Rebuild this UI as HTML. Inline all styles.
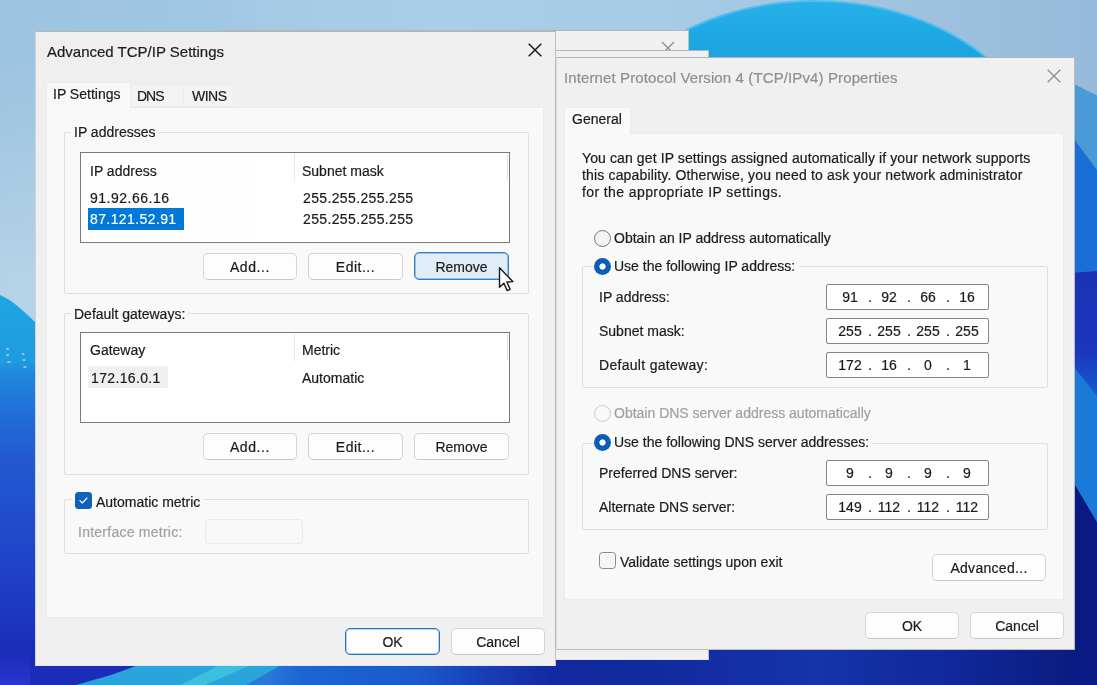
<!DOCTYPE html>
<html lang="en">
<head>
<meta charset="utf-8">
<title>Advanced TCP/IP Settings</title>
<style>
*{box-sizing:border-box;margin:0;padding:0}
html,body{width:1097px;height:685px;overflow:hidden;background:#9fc5e0}
body{-webkit-text-stroke:.2px currentColor;position:relative;font-family:"Liberation Sans",Arial,sans-serif;font-size:14px;color:#1b1b1b;line-height:16px}
.abs,.win,.t,.btn,.grp,.list,.ipf,.page,.tab{position:absolute}
#wall{position:absolute;left:0;top:0;width:1097px;height:685px}
.win{background:#f0f0f0;border:1px solid #bebebe;border-top-color:#b2b6ba;border-left-color:#cdd4da;border-bottom-color:#e6e6e6}
.page{background:#f9f9f9;border:1px solid #ececec}
.t{white-space:nowrap;height:16px;line-height:16px}
.title{font-size:15px}
.grp{border:1px solid #dfdfdf;border-radius:2px}
.glab{position:absolute;background:#f9f9f9;white-space:nowrap;height:16px;line-height:16px}
.list{background:#fff;border:1px solid #7a7a7a}
.btn{height:27px;padding-top:1px;border:1px solid #d4d4d4;border-bottom-color:#c6c6c6;border-radius:5px;background:#fdfdfd;text-align:center;line-height:25px;white-space:nowrap}
.btn.def{border:1px solid #1f74c4;box-shadow:inset 0 0 0 1px rgba(31,116,196,.3);line-height:25px}
.btn.hot{border:1px solid #2d7fc6;box-shadow:inset 0 0 0 1px rgba(45,127,198,.4);background:#e0edf9;line-height:25px;padding-top:1.5px}
.ipf{height:26px;width:163px;border:1px solid #868686;border-radius:2px;background:#fff}
.ipf span{position:absolute;top:4px;width:30px;text-align:center;height:16px;line-height:16px;white-space:nowrap}
.ipf i{position:absolute;top:4px;width:8px;text-align:center;font-style:normal;height:16px;line-height:16px}
.radio{position:absolute;width:17px;height:17px;border-radius:50%;border:1px solid #787878;background:#f3f3f3}
.radio.on{border:none;background:radial-gradient(circle at center,#fff 0,#fff 2.7px,#0c5fb6 3.5px)}
.radio.dis{border-color:#c9c9c9;background:#f8f8f8}
.gray{color:#a0a0a0}
</style>
</head>
<body>
<div id="root" style="position:absolute;left:0;top:0;width:1097px;height:685px;overflow:hidden;will-change:transform;opacity:.999">
<svg id="wall" viewBox="0 0 1097 685" preserveAspectRatio="none">
<defs>
<linearGradient id="sky" x1="0" y1="0" x2="1" y2="0">
<stop offset="0" stop-color="#9cc3df"/><stop offset="0.4" stop-color="#a9cfe8"/><stop offset="0.6" stop-color="#a6cce6"/><stop offset="1" stop-color="#98badA"/>
</linearGradient>
<linearGradient id="skyv" x1="0" y1="0" x2="0" y2="1">
<stop offset="0" stop-color="#fff" stop-opacity="0"/><stop offset="0.15" stop-color="#fff" stop-opacity="0"/><stop offset="0.8" stop-color="#fff" stop-opacity="0.25"/><stop offset="1" stop-color="#fff" stop-opacity="0.25"/>
</linearGradient>
<linearGradient id="leftb" x1="0" y1="295" x2="0" y2="685" gradientUnits="userSpaceOnUse">
<stop offset="0" stop-color="#1fa6e2"/><stop offset="0.17" stop-color="#1f9be0"/><stop offset="0.2" stop-color="#2088dc"/><stop offset="0.3" stop-color="#2070d8"/><stop offset="0.42" stop-color="#2259d2"/><stop offset="0.7" stop-color="#1f42c8"/><stop offset="0.92" stop-color="#1b2cba"/><stop offset="1" stop-color="#2a35d0"/>
</linearGradient>
<linearGradient id="bot" x1="270" y1="0" x2="1097" y2="0" gradientUnits="userSpaceOnUse">
<stop offset="0" stop-color="#2a78d8"/><stop offset="0.036" stop-color="#1b66d2"/><stop offset="0.18" stop-color="#1a5acb"/><stop offset="0.254" stop-color="#1840b8"/><stop offset="0.35" stop-color="#12289e"/><stop offset="0.447" stop-color="#112a9e"/><stop offset="0.665" stop-color="#1434a8"/><stop offset="0.822" stop-color="#10289a"/><stop offset="0.955" stop-color="#0c1d84"/><stop offset="1" stop-color="#08146e"/>
</linearGradient>
<linearGradient id="r3" x1="0" y1="273" x2="0" y2="400" gradientUnits="userSpaceOnUse">
<stop offset="0" stop-color="#1a33b6"/><stop offset="0.6" stop-color="#1a36bc"/><stop offset="1" stop-color="#1a5ed0"/>
</linearGradient>
<linearGradient id="bloom" x1="0" y1="0" x2="0" y2="70" gradientUnits="userSpaceOnUse"><stop offset="0" stop-color="#27b0e8"/><stop offset="1" stop-color="#16a2e0"/></linearGradient>
</defs>
<rect width="1097" height="685" fill="url(#sky)"/>
<rect width="600" height="340" fill="url(#skyv)"/>
<path d="M0 295 C12 300 24 311 40 327 L40 685 L0 685Z" fill="url(#leftb)"/>
<g fill="#cfeaf8" opacity=".6"><ellipse cx="7.5" cy="349" rx="1.6" ry="1"/><ellipse cx="7.5" cy="355" rx="1.6" ry="1"/><ellipse cx="9" cy="362" rx="2" ry="1.1"/><ellipse cx="23" cy="354" rx="1.6" ry="1"/><ellipse cx="24" cy="360" rx="1.6" ry="1"/><ellipse cx="25" cy="367" rx="1.8" ry="1"/></g>
<rect x="30" y="640" width="120" height="45" fill="#1a2cb8"/>
<rect x="246" y="640" width="851" height="45" fill="url(#bot)"/>
<path d="M76 685 C100 678 125 672 148 660 L290 660 L246 685Z" fill="#2aa5dc"/>
<path d="M180 685 L230 660 L262 660 L205 685Z" fill="#3cc0e0"/>
<ellipse cx="815" cy="171" rx="230" ry="170" fill="url(#bloom)" stroke="#52bdec" stroke-width="2"/>
<path d="M1070 82 L1097 95.5 L1097 170 L1070 133Z" fill="#4b9ad8"/>
<path d="M1070 133 L1097 170 L1097 273 L1070 273Z" fill="#1a6fd6"/>
<path d="M1070 273 L1097 271 L1097 400 L1070 365Z" fill="url(#r3)"/>
<path d="M1070 362 L1097 396 L1097 522 L1070 476Z" fill="#1a7ad8"/>
<path d="M1070 476 L1097 522 L1097 685 L1070 685Z" fill="#0a1a85"/>
</svg>

<!-- hidden windows behind -->
<div class="win" style="left:217px;top:30px;width:472px;height:620px"></div>
<svg class="abs" style="left:661px;top:41px" width="14" height="14" viewBox="0 0 14 14"><path d="M1 1L13 13M13 1L1 13" stroke="#8c8c8c" stroke-width="1.3" fill="none"/></svg>
<div class="win" style="left:540px;top:50px;width:169px;height:610px"></div>

<!-- LEFT WINDOW -->
<div class="win" id="lw" style="left:35px;top:31px;width:521px;height:635px"></div>
<div class="t title" style="left:47px;top:44px">Advanced TCP/IP Settings</div>
<svg class="abs" style="left:528px;top:43px" width="14" height="14" viewBox="0 0 14 14"><path d="M0.7 0.7L13.3 13.3M13.3 0.7L0.7 13.3" stroke="#1a1a1a" stroke-width="1.5" fill="none"/></svg>

<div class="tab" style="left:130px;top:84px;width:54px;height:23px;background:#f4f4f4;border:1px solid #eeeeee"></div>
<div class="tab" style="left:183px;top:84px;width:51px;height:23px;background:#f4f4f4;border:1px solid #eeeeee"></div>
<div class="page" style="left:46px;top:107px;width:498px;height:511px"></div>
<div class="tab" style="left:46px;top:82px;width:85px;height:26px;background:#f9f9f9;border:1px solid #ececec;border-bottom:none"></div>
<div class="t" style="left:53px;top:86px">IP Settings</div>
<div class="t" style="left:137px;top:88px;letter-spacing:-1px">DNS</div>
<div class="t" style="left:192px;top:88px;letter-spacing:-.5px">WINS</div>

<!-- group 1 -->
<div class="grp" style="left:64px;top:132px;width:465px;height:162px"></div>
<div class="glab" style="left:71px;top:124px;padding:0 3px">IP addresses</div>
<div class="list" style="left:80px;top:152px;width:430px;height:91px"></div>
<div class="abs" style="left:294px;top:154px;width:1px;height:27px;background:#e5e5e5"></div>
<div class="abs" style="left:507px;top:154px;width:1px;height:27px;background:#e5e5e5"></div>
<div class="t" style="left:90px;top:163px">IP address</div>
<div class="t" style="left:302px;top:163px">Subnet mask</div>
<div class="t" style="left:90px;top:190px;letter-spacing:.5px">91.92.66.16</div>
<div class="t" style="left:303px;top:190px;letter-spacing:.36px">255.255.255.255</div>
<div class="abs" style="left:88px;top:208px;width:96px;height:22px;background:#0078d7"></div>
<div class="t" style="left:90px;top:211px;color:#fff;letter-spacing:.4px">87.121.52.91</div>
<div class="t" style="left:303px;top:211px;letter-spacing:.36px">255.255.255.255</div>
<div class="btn" style="left:203px;top:253px;width:94px;letter-spacing:.6px">Add...</div>
<div class="btn" style="left:308px;top:253px;width:95px;letter-spacing:.5px">Edit...</div>
<div class="btn hot" style="left:414px;top:252px;width:95px;height:28px">Remove</div>

<!-- group 2 -->
<div class="grp" style="left:64px;top:313px;width:465px;height:162px"></div>
<div class="glab" style="left:71px;top:306px;padding:0 3px">Default gateways:</div>
<div class="list" style="left:80px;top:332px;width:430px;height:91px"></div>
<div class="abs" style="left:294px;top:334px;width:1px;height:27px;background:#e5e5e5"></div>
<div class="abs" style="left:507px;top:334px;width:1px;height:27px;background:#e5e5e5"></div>
<div class="t" style="left:90px;top:342px">Gateway</div>
<div class="t" style="left:302px;top:342px">Metric</div>
<div class="abs" style="left:88px;top:366px;width:80px;height:22px;background:#f0f0f0"></div>
<div class="t" style="left:91px;top:370px;letter-spacing:.35px">172.16.0.1</div>
<div class="t" style="left:302px;top:370px">Automatic</div>
<div class="btn" style="left:203px;top:433px;width:94px;letter-spacing:.6px">Add...</div>
<div class="btn" style="left:308px;top:433px;width:95px;letter-spacing:.5px">Edit...</div>
<div class="btn" style="left:414px;top:433px;width:95px">Remove</div>

<!-- group 3 -->
<div class="grp" style="left:64px;top:499px;width:465px;height:55px"></div>
<div class="glab" style="left:72px;top:491px;width:132px;height:20px"></div>
<div class="abs" style="left:75px;top:492px;width:17px;height:17px;border-radius:3.5px;background:#0f62b9"></div>
<svg class="abs" style="left:75px;top:492px" width="17" height="17" viewBox="0 0 17 17"><path d="M5 8.7L7.3 11L12 6" stroke="#fff" stroke-width="1.15" fill="none" stroke-linecap="round" stroke-linejoin="round"/></svg>
<div class="t" style="left:96px;top:494px">Automatic metric</div>
<div class="t gray" style="left:78px;top:524px;letter-spacing:.25px">Interface metric:</div>
<div class="abs" style="left:205px;top:519px;width:98px;height:25px;border:1px solid #ebebeb;background:#f8f8f8;border-radius:3px"></div>

<div class="btn def" style="left:345px;top:628px;width:95px;height:27px">OK</div>
<div class="btn" style="left:451px;top:628px;width:94px;height:27px">Cancel</div>

<!-- RIGHT WINDOW -->
<div class="win" id="rw" style="left:556px;top:57px;width:519px;height:593px;border-left-color:#d9d9d9;border-bottom-color:#bdbdbd"></div>
<div class="t title" style="left:564px;top:70px;color:#8e8e8e;letter-spacing:.12px">Internet Protocol Version 4 (TCP/IPv4) Properties</div>
<svg class="abs" style="left:1047px;top:69px" width="14" height="14" viewBox="0 0 14 14"><path d="M0.7 0.7L13.3 13.3M13.3 0.7L0.7 13.3" stroke="#8c8c8c" stroke-width="1.3" fill="none"/></svg>

<div class="page" style="left:564px;top:133px;width:500px;height:467px"></div>
<div class="tab" style="left:564px;top:107px;width:67px;height:28px;background:#f9f9f9;border:1px solid #ececec;border-bottom:none"></div>
<div class="t" style="left:572px;top:111px">General</div>

<div class="t" style="left:582px;top:150px;letter-spacing:.11px">You can get IP settings assigned automatically if your network supports</div>
<div class="t" style="left:582px;top:167px;letter-spacing:.16px">this capability. Otherwise, you need to ask your network administrator</div>
<div class="t" style="left:582px;top:184px;letter-spacing:.4px">for the appropriate IP settings.</div>

<div class="radio" style="left:594px;top:230px"></div>
<div class="t" style="left:614px;top:230px">Obtain an IP address automatically</div>

<div class="grp" style="left:582px;top:266px;width:466px;height:122px"></div>
<div class="glab" style="left:594px;top:257px;width:206px;height:20px"></div>
<div class="radio on" style="left:594px;top:258px"></div>
<div class="t" style="left:614px;top:258px">Use the following IP address:</div>
<div class="t" style="left:599px;top:289px">IP address:</div>
<div class="t" style="left:599px;top:323px">Subnet mask:</div>
<div class="t" style="left:599px;top:357px;letter-spacing:.3px">Default gateway:</div>
<div class="ipf" style="left:826px;top:284px"><span style="left:8px">91</span><i style="left:39px">.</i><span style="left:47px">92</span><i style="left:78px">.</i><span style="left:86px">66</span><i style="left:117px">.</i><span style="left:125px">16</span></div>
<div class="ipf" style="left:826px;top:318px"><span style="left:8px">255</span><i style="left:39px">.</i><span style="left:47px">255</span><i style="left:78px">.</i><span style="left:86px">255</span><i style="left:117px">.</i><span style="left:125px">255</span></div>
<div class="ipf" style="left:826px;top:352px"><span style="left:8px">172</span><i style="left:39px">.</i><span style="left:47px">16</span><i style="left:78px">.</i><span style="left:86px">0</span><i style="left:117px">.</i><span style="left:125px">1</span></div>

<div class="radio dis" style="left:594px;top:405px"></div>
<div class="t gray" style="left:614px;top:405px">Obtain DNS server address automatically</div>

<div class="grp" style="left:582px;top:443px;width:466px;height:87px"></div>
<div class="glab" style="left:594px;top:433px;width:278px;height:20px"></div>
<div class="radio on" style="left:594px;top:434px"></div>
<div class="t" style="left:614px;top:434px">Use the following DNS server addresses:</div>
<div class="t" style="left:599px;top:465px">Preferred DNS server:</div>
<div class="t" style="left:599px;top:499px">Alternate DNS server:</div>
<div class="ipf" style="left:826px;top:460px"><span style="left:8px">9</span><i style="left:39px">.</i><span style="left:47px">9</span><i style="left:78px">.</i><span style="left:86px">9</span><i style="left:117px">.</i><span style="left:125px">9</span></div>
<div class="ipf" style="left:826px;top:494px"><span style="left:8px">149</span><i style="left:39px">.</i><span style="left:47px">112</span><i style="left:78px">.</i><span style="left:86px">112</span><i style="left:117px">.</i><span style="left:125px">112</span></div>

<div class="abs" style="left:599px;top:552px;width:17px;height:17px;border:1px solid #8a8a8a;border-radius:3.5px;background:#f6f6f6"></div>
<div class="t" style="left:620px;top:554px">Validate settings upon exit</div>
<div class="btn" style="left:932px;top:554px;width:114px;letter-spacing:.3px">Advanced...</div>

<div class="btn" style="left:865px;top:612px;width:94px">OK</div>
<div class="btn" style="left:970px;top:612px;width:94px">Cancel</div>

<!-- cursor -->
<svg class="abs" style="left:497px;top:264px" width="20" height="30" viewBox="0 0 20 30"><path d="M2.5 3.8 L2.5 23.2 L6.9 19.2 L10.2 26.6 L13.1 25.3 L9.9 18 L15.8 17.6 Z" fill="#fff" stroke="#1a1a1a" stroke-width="1.4" stroke-linejoin="round"/></svg>
</div>
</body>
</html>
